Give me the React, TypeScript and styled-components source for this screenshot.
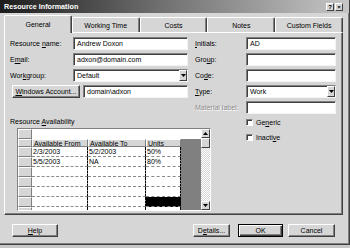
import React from "react";
import styled, { createGlobalStyle } from "styled-components";

const Global = createGlobalStyle`
  html, body { margin: 0; padding: 0; background: #c8c8c8; }
  body { font-family: "Liberation Sans", Arial, sans-serif; font-size: 7px; color: #000; }
  * { box-sizing: border-box; }
  u { text-decoration-thickness: 1px; text-underline-offset: 1px; }
`;

const Dialog = styled.div`
  width: 350px;
  height: 245px;
  background: #d6d6d6;
  border-right: 1px solid #404040;
  border-bottom: 1px solid #404040;
  box-shadow: inset -1px -1px 0 #808080;
  display: flex;
  flex-direction: column;
`;

const TitleBar = styled.div`
  height: 13px;
  flex: none;
  background: linear-gradient(90deg, #1c1c1c 0%, #6e6e6e 45%, #c6c6c6 100%);
  display: flex;
  align-items: center;
  padding: 0 6px 0 4px;
`;

const Title = styled.span`
  flex: 1;
  color: #fff;
  font-weight: bold;
  font-size: 7.2px;
`;

const CaptionButton = styled.div<{ $gap?: boolean }>`
  width: 8px;
  height: 8px;
  margin-left: ${(p) => (p.$gap ? "1px" : "0")};
  background: #d6d6d6;
  border: 1px solid;
  border-color: #fff #404040 #404040 #fff;
  display: flex;
  align-items: center;
  justify-content: center;
  font-size: 6px;
  font-weight: bold;
  line-height: 1;
`;

const TabStrip = styled.div`
  margin: 2px 0 0 4px;
  width: 339px;
  height: 17px;
  display: flex;
  align-items: flex-start;
  position: relative;
  z-index: 1;
`;

const Tab = styled.div<{ $active?: boolean }>`
  flex: 1;
  height: ${(p) => (p.$active ? "18px" : "15px")};
  margin-top: ${(p) => (p.$active ? "0" : "2px")};
  background: #d6d6d6;
  border-top: 1px solid #fff;
  border-left: 1px solid #fff;
  border-right: 1px solid #404040;
  border-radius: 2px 2px 0 0;
  box-shadow: inset -1px 0 0 #808080;
  display: flex;
  align-items: center;
  justify-content: center;
  padding-bottom: ${(p) => (p.$active ? "1px" : "0")};
`;

const Panel = styled.div`
  margin-left: 4px;
  width: 339px;
  height: 183px;
  flex: none;
  border: 1px solid;
  border-color: #fff #404040 #404040 #fff;
  box-shadow: inset -1px -1px 0 #808080;
  padding: 4px 0 0 5px;
`;

const FormGrid = styled.div`
  display: grid;
  grid-template-columns: 63px 115px 58px 90px;
  grid-auto-rows: 13px;
  row-gap: 3px;
`;

const Label = styled.div<{ $right?: boolean; $disabled?: boolean }>`
  line-height: 13px;
  padding-left: ${(p) => (p.$right ? "7px" : "0")};
  grid-column: ${(p) => (p.$disabled ? "3" : "auto")};
  color: ${(p) => (p.$disabled ? "#8c8c8c" : "#000")};
  text-shadow: ${(p) => (p.$disabled ? "1px 1px 0 #fff" : "none")};
  white-space: nowrap;
`;

const Field = styled.div<{ $grow?: boolean; $select?: boolean }>`
  background: #fff;
  border: 1px solid;
  border-color: #808080 #f4f4f4 #f4f4f4 #808080;
  box-shadow: inset 1px 1px 0 #404040;
  display: flex;
  align-items: center;
  padding-left: 3px;
  padding-right: ${(p) => (p.$select ? "0" : "2px")};
  white-space: nowrap;
  overflow: hidden;
  flex: ${(p) => (p.$grow ? "1" : "none")};
`;

const FieldText = styled.span`
  flex: 1;
`;

const DropButton = styled.div`
  width: 8px;
  height: 100%;
  background: #d6d6d6;
  border: 1px solid;
  border-color: #fff #404040 #404040 #fff;
  display: flex;
  align-items: center;
  justify-content: center;
`;

const AccountCell = styled.div`
  grid-column: 1 / span 2;
  display: flex;
  padding-left: 2px;
  gap: 3px;
`;

const Button = styled.div<{ $w: number; $default?: boolean }>`
  width: ${(p) => p.$w}px;
  height: 13px;
  flex: none;
  background: #d6d6d6;
  border: 1px solid;
  border-color: ${(p) => (p.$default ? "#000" : "#fff #404040 #404040 #fff")};
  box-shadow: ${(p) =>
    p.$default
      ? "inset 1px 1px 0 #fff, inset -1px -1px 0 #404040, inset -2px -2px 0 #808080"
      : "inset -1px -1px 0 #808080"};
  display: flex;
  align-items: center;
  justify-content: center;
  white-space: nowrap;
`;

const Lower = styled.div`
  display: flex;
  margin-top: 3px;
`;

const AvailCol = styled.div`
  width: 201px;
  display: flex;
  flex-direction: column;
`;

const SectionLabel = styled.div`
  height: 10px;
  line-height: 10px;
`;

const GridBox = styled.div`
  margin: 1px 0 0 7px;
  width: 194px;
  height: 83px;
  border: 1px solid;
  border-color: #808080 #fff #fff #808080;
  display: flex;
  background: #808080;
`;

const TableArea = styled.div`
  flex: 1;
  display: flex;
  flex-direction: column;
  overflow: hidden;
`;

const GridRow = styled.div<{ $h: number }>`
  height: ${(p) => p.$h}px;
  flex: none;
  display: flex;
`;

const RowHead = styled.div`
  width: 14px;
  flex: none;
  background: #d6d6d6;
  border-top: 1px solid #fff;
  border-left: 1px solid #fff;
  border-right: 1px solid #808080;
  border-bottom: 1px solid #808080;
`;

const EditBar = styled.div`
  flex: 1;
  background: #fff;
`;

const HeadCell = styled.div<{ $w: number }>`
  width: ${(p) => p.$w}px;
  flex: none;
  background: #d6d6d6;
  border-top: 1px solid #fff;
  border-left: 1px solid #fff;
  border-right: 1px solid #808080;
  border-bottom: 1px solid #808080;
  display: flex;
  align-items: center;
  padding-left: 1px;
  white-space: nowrap;
  overflow: hidden;
`;

const Cell = styled.div<{ $w: number; $black?: boolean }>`
  width: ${(p) => p.$w}px;
  flex: none;
  background: ${(p) => (p.$black ? "#000" : "#fff")};
  border-right: 1px dashed #000;
  border-bottom: 1px dashed #8a8a8a;
  display: flex;
  align-items: center;
  padding-left: 1px;
  white-space: nowrap;
  overflow: hidden;
`;

const ScrollBar = styled.div`
  width: 9px;
  flex: none;
  display: flex;
  flex-direction: column;
  background: #ececec;
`;

const ScrollBtn = styled.div<{ $h: number }>`
  height: ${(p) => p.$h}px;
  flex: none;
  background: #d6d6d6;
  border: 1px solid;
  border-color: #fff #404040 #404040 #fff;
  display: flex;
  align-items: center;
  justify-content: center;
`;

const Track = styled.div`
  flex: 1;
  background: repeating-conic-gradient(#fff 0% 25%, #d6d6d6 0% 50%) 0 0 / 2px 2px;
`;

const CheckCol = styled.div`
  margin-left: 35px;
  display: flex;
  flex-direction: column;
  gap: 5px;
`;

const CheckRow = styled.div`
  height: 10px;
  display: flex;
  align-items: center;
  gap: 3px;
`;

const CheckBox = styled.div`
  width: 7px;
  height: 7px;
  background: #fff;
  border: 1px solid;
  border-color: #808080 #fff #fff #808080;
  box-shadow: inset 1px 1px 0 #404040;
`;

const ButtonRow = styled.div`
  margin-top: 9px;
  display: flex;
  padding: 0 14px 0 12px;
`;

const Spacer = styled.div`
  flex: 1;
`;

const Gap = styled.div<{ $w: number }>`
  width: ${(p) => p.$w}px;
  flex: none;
`;

const Arrow = ({ down }: { down?: boolean }) => (
  <svg width="5" height="3" viewBox="0 0 5 3">
    <polygon points={down ? "0,0 5,0 2.5,3" : "0,3 5,3 2.5,0"} fill="#000" />
  </svg>
);

const tabs = ["General", "Working Time", "Costs", "Notes", "Custom Fields"];

const rows: [string, string, string][] = [
  ["2/3/2003", "5/2/2003", "50%"],
  ["5/5/2003", "NA", "80%"],
  ["", "", ""],
  ["", "", ""],
  ["", "", ""],
  ["", "", ""],
  ["", "", ""],
];

export default function App() {
  return (
    <>
      <Global />
      <Dialog>
        <TitleBar>
          <Title>Resource Information</Title>
          <CaptionButton>?</CaptionButton>
          <CaptionButton $gap>×</CaptionButton>
        </TitleBar>
        <TabStrip>
          {tabs.map((t, i) => (
            <Tab key={t} $active={i === 0}>
              {t}
            </Tab>
          ))}
        </TabStrip>
        <Panel>
          <FormGrid>
            <Label>
              Resource <u>n</u>ame:
            </Label>
            <Field>Andrew Doxon</Field>
            <Label $right>
              <u>I</u>nitials:
            </Label>
            <Field>AD</Field>

            <Label>
              E<u>m</u>ail:
            </Label>
            <Field>adxon@domain.com</Field>
            <Label $right>
              Gro<u>u</u>p:
            </Label>
            <Field />

            <Label>
              Wor<u>k</u>group:
            </Label>
            <Field $select>
              <FieldText>Default</FieldText>
              <DropButton>
                <Arrow down />
              </DropButton>
            </Field>
            <Label $right>
              Co<u>d</u>e:
            </Label>
            <Field />

            <AccountCell>
              <Button $w={68}>
                <span>
                  <u>W</u>indows Account...
                </span>
              </Button>
              <Field $grow>domain\adxon</Field>
            </AccountCell>
            <Label $right>
              <u>T</u>ype:
            </Label>
            <Field $select>
              <FieldText>Work</FieldText>
              <DropButton>
                <Arrow down />
              </DropButton>
            </Field>

            <Label $right $disabled>
              Material label:
            </Label>
            <Field />
          </FormGrid>

          <Lower>
            <AvailCol>
              <SectionLabel>
                Resource <u>A</u>vailability
              </SectionLabel>
              <GridBox>
                <TableArea>
                  <GridRow $h={10}>
                    <RowHead />
                    <EditBar />
                  </GridRow>
                  <GridRow $h={8}>
                    <RowHead />
                    <HeadCell $w={56}>Available From</HeadCell>
                    <HeadCell $w={58}>Available To</HeadCell>
                    <HeadCell $w={35}>Units</HeadCell>
                  </GridRow>
                  {rows.map((r, i) => (
                    <GridRow $h={10} key={i}>
                      <RowHead />
                      <Cell $w={56}>{r[0]}</Cell>
                      <Cell $w={58}>{r[1]}</Cell>
                      <Cell $w={35} $black={i === 5}>
                        {r[2]}
                      </Cell>
                    </GridRow>
                  ))}
                </TableArea>
                <ScrollBar>
                  <ScrollBtn $h={9}>
                    <Arrow />
                  </ScrollBtn>
                  <ScrollBtn $h={10} />
                  <Track />
                  <ScrollBtn $h={9}>
                    <Arrow down />
                  </ScrollBtn>
                </ScrollBar>
              </GridBox>
            </AvailCol>
            <CheckCol>
              <CheckRow>
                <CheckBox />
                <span>
                  Ge<u>n</u>eric
                </span>
              </CheckRow>
              <CheckRow>
                <CheckBox />
                <span>
                  Inacti<u>v</u>e
                </span>
              </CheckRow>
            </CheckCol>
          </Lower>
        </Panel>
        <ButtonRow>
          <Button $w={46}>
            <span>
              <u>H</u>elp
            </span>
          </Button>
          <Spacer />
          <Button $w={37}>
            <span>
              D<u>e</u>tails...
            </span>
          </Button>
          <Gap $w={8} />
          <Button $w={45} $default>
            OK
          </Button>
          <Gap $w={5} />
          <Button $w={47}>Cancel</Button>
        </ButtonRow>
      </Dialog>
    </>
  );
}
